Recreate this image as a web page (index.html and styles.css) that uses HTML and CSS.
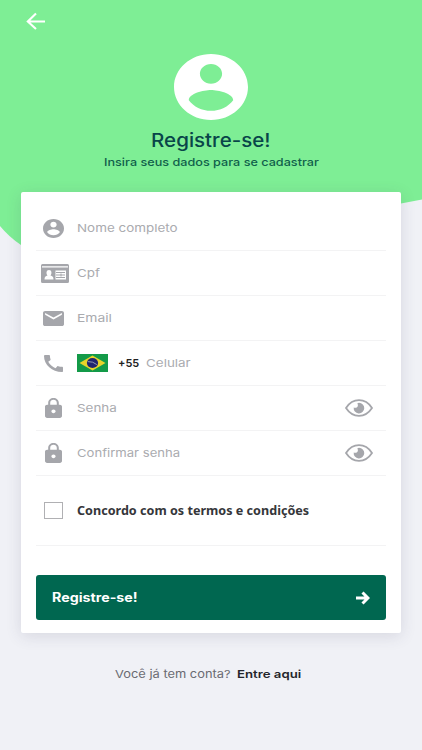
FILE: index.html
```html
<!DOCTYPE html>
<html lang="pt-BR">
<head>
<meta charset="utf-8">
<meta name="viewport" content="width=device-width, initial-scale=1">
<title>Registre-se</title>
<link rel="stylesheet" href="styles.css">
</head>
<body>
<svg class="defs" aria-hidden="true">
  <symbol id="person" viewBox="2 2 20 20" preserveAspectRatio="none"><path d="M12 2C6.48 2 2 6.48 2 12s4.48 10 10 10 10-4.480 10-10S17.520 2 12 2zm0 3c1.660 0 3 1.340 3 3s-1.340 3-3 3-3-1.340-3-3 1.340-3 3-3zm0 14.200c-2.500 0-4.710-1.280-6-3.220.03-1.990 4-3.080 6-3.080 1.990 0 5.970 1.090 6 3.080-1.290 1.940-3.500 3.220-6 3.220z"/></symbol>
  <symbol id="lock" viewBox="4 1 16 21" preserveAspectRatio="none"><path d="M18 8h-1V6c0-2.760-2.240-5-5-5S7 3.240 7 6v2H6c-1.100 0-2 .9-2 2v10c0 1.100.9 2 2 2h12c1.100 0 2-.9 2-2V10c0-1.100-.9-2-2-2zm-6 9c-1.100 0-2-.9-2-2s.9-2 2-2 2 .9 2 2-.9 2-2 2zm3.100-9H8.900V6c0-1.710 1.390-3.100 3.100-3.100s3.100 1.390 3.100 3.100v2z"/></symbol>
  <symbol id="eye" viewBox="0 0 28 18"><path d="M1 9C4.500 3.600 8.800 1.200 14 1.200S23.500 3.600 27 9c-3.500 5.400-7.800 7.800-13 7.800S4.500 14.400 1 9z" fill="none" stroke="currentColor" stroke-width="1.800"/><path d="M14 3.800a5.300 5.300 0 1 1-5.300 4.700c1.400.7 3.500.3 4-1.200.4-1 .2-2-.4-2.800.5-.4 1.100-.6 1.700-.7z"/></symbol>
</svg>
<main class="screen">
  <svg class="backdrop" viewBox="0 0 422 260" aria-hidden="true"><path d="M0 0H422V199.500L401 203.500C300 225 200 285 95 270C58 267 36 257 21 245Q9 237 0 226Z"/></svg>
  <header class="header">
    <svg class="back" viewBox="0 0 20 18" aria-label="Voltar"><path d="M19 9.500H2M10 1.500 1.800 9.500 10 17"/></svg>
    <svg class="avatar"><use href="#person"/></svg>
    <h1 class="title"><span>Registre-se!</span></h1>
    <p class="subtitle"><span>Insira seus dados para se cadastrar</span></p>
  </header>
  <section class="card">
    <div class="row"><span class="icon"><svg class="i-person"><use href="#person"/></svg></span><span class="label name">Nome completo</span></div>
    <div class="row"><span class="icon"><svg class="i-id" viewBox="0 0 28 19"><path fill-rule="evenodd" d="M1.500 0h25Q28 0 28 1.500v16q0 1.500-1.500 1.500h-25Q0 19 0 17.500v-16Q0 0 1.500 0zM1 2.200v1.200h26V2.200z"/><path class="paper" d="M3.500 15.500c0-2.600 1-3.500 3-4-1.500-1.800-1.400-5.500 1.500-5.500s3 3.700 1.500 5.500c2 .5 3 1.400 3 4zM14.500 6.500H25v9H14.500z"/><path d="M15 8.500h9M15 11h9M15 13.500h9M20 9.500v3" stroke="currentColor"/></svg></span><span class="label cpf">Cpf</span></div>
    <div class="row"><span class="icon"><svg class="i-mail" viewBox="2 4 20 16" preserveAspectRatio="none"><path d="M20 4H4c-1.100 0-2 .9-2 2v12c0 1.100.9 2 2 2h16c1.100 0 2-.9 2-2V6c0-1.100-.9-2-2-2zm0 4-8 5-8-5V6l8 5 8-5v2z"/></svg></span><span class="label email">Email</span></div>
    <div class="row"><span class="icon"><svg class="i-phone" viewBox="3 3 18 18" preserveAspectRatio="none"><path d="M20.010 15.380c-1.230 0-2.420-.2-3.530-.56-.35-.12-.74-.03-1.010.24l-1.570 1.970c-2.830-1.350-5.480-3.900-6.890-6.830l1.950-1.660c.27-.28.350-.67.240-1.020-.37-1.110-.56-2.300-.56-3.530 0-.54-.45-.99-.99-.99H4.190C3.650 3 3 3.240 3 3.990 3 13.280 10.730 21 20.010 21c.710 0 .99-.63.99-1.180v-3.450c0-.54-.45-.99-.99-.99z"/></svg></span><svg class="flag" viewBox="0 0 31 18"><path fill="#139a48" d="M0 0h31v18H0z"/><path fill="#e8d42a" d="M15.500 1.500 28.500 9l-13 7.500L2.500 9z"/><ellipse cx="15.500" cy="9" rx="5.600" ry="4.900" fill="#20256f"/><path d="M10.800 7.600q5.200-.3 9 3" fill="none" stroke="#aeb8c5" stroke-width=".8"/></svg><span class="code">+55</span><span class="label phone">Celular</span></div>
    <div class="row"><span class="icon"><svg class="i-lock"><use href="#lock"/></svg></span><span class="label pass">Senha</span><svg class="eye"><use href="#eye"/></svg></div>
    <div class="row"><span class="icon"><svg class="i-lock"><use href="#lock"/></svg></span><span class="label confirm">Confirmar senha</span><svg class="eye"><use href="#eye"/></svg></div>
    <div class="row terms"><span class="icon"><span class="box"></span></span><span class="agree">Concordo com os termos e condições</span></div>
    <div class="submit"><span class="submit-text">Registre-se!</span><svg class="arrow" viewBox="0 0 14 14"><path d="M0 7h11M6.500 1.500 12 7l-5.500 5.500"/></svg></div>
  </section>
  <footer class="footer"><span class="ask">Você já tem conta?</span><span class="login">Entre aqui</span></footer>
</main>
</body>
</html>
```
FILE: styles.css
```css
* { box-sizing: border-box; }
body { margin: 0; background: #f0f1f6; font-family: Inter, "Liberation Sans", sans-serif; }
svg { display: block; fill: currentColor; }
.defs { position: absolute; width: 0; height: 0; }
.screen { position: relative; width: 422px; height: 750px; overflow: hidden; }
.backdrop { position: absolute; top: 0; left: 0; width: 422px; height: 260px; color: #7eee95; }
.header { position: relative; height: 192px; padding-top: 12px; display: flex; flex-direction: column; align-items: center; }
.back { align-self: flex-start; margin-left: 26px; width: 20px; height: 18px; fill: none; stroke: #fff; stroke-width: 2.1; }
.avatar { margin-top: 24px; width: 74px; height: 66px; color: #fff; }
.title { margin: 8px 0 0; font-size: 18.500px; line-height: 24px; font-weight: 500; color: #084549; white-space: nowrap; }
.title span { display: inline-block; transform: scaleX(1.11); }
.subtitle { margin: 2px 0 0; font-size: 11px; line-height: 16px; font-weight: 500; color: #10604b; white-space: nowrap; }
.subtitle span { display: inline-block; transform: scaleX(1.15); }
.card { position: relative; width: 380px; height: 441px; margin-left: 21px; padding: 14px 15px; background: #fff; border-radius: 2px; box-shadow: 0 3px 16px rgba(60, 60, 90, .14); }
.row { height: 45px; display: flex; align-items: center; border-bottom: 1px solid #f3f3f4; color: #a5a6ab; white-space: nowrap; }
.icon { width: 35px; margin-right: 6px; display: flex; justify-content: center; flex: none; }
.i-person { width: 21px; height: 19px; }
.i-id { width: 28px; height: 19px; margin-left: 3px; }
.paper { fill: #fff; }
.i-mail { width: 21px; height: 15px; }
.i-phone { width: 19px; height: 17px; }
.i-lock { width: 17px; height: 20px; }
.label { font-size: 11px; color: #aaabaf; transform-origin: left; transform: scaleX(1.22); }
.confirm { transform: scaleX(1.19); }
.email { transform: scaleX(1.26); }
.flag { width: 31px; height: 18px; }
.code { width: 28px; margin-left: 10px; font-size: 11px; font-weight: 600; color: #222; }
.eye { width: 28px; height: 18px; margin-left: auto; margin-right: 13px; }
.terms { height: 70px; }
.box { width: 19px; height: 17px; border: 1.500px solid #b0b0b3; }
.agree { font: 700 12px "Noto Sans", sans-serif; color: #35363a; transform-origin: left; transform: scaleX(1.05); }
.submit { margin-top: 29px; height: 45px; padding: 0 16px; display: flex; align-items: center; justify-content: space-between; background: #006750; border-radius: 3px; color: #fff; }
.submit-text { font-size: 12.500px; font-weight: 700; transform-origin: left; transform: scaleX(1.14); }
.arrow { width: 14px; height: 14px; fill: none; stroke: #fff; stroke-width: 3; }
.footer { margin: 32px 0 0 115px; height: 17px; display: flex; align-items: center; font-size: 11px; color: #6a6b72; white-space: nowrap; }
.ask { width: 122px; transform-origin: left; transform: scaleX(1.17); }
.login { font-weight: 600; color: #24252b; transform-origin: left; transform: scaleX(1.2); }
```
